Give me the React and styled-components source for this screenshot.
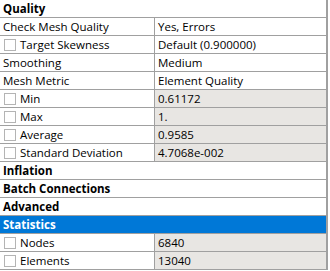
import React from "react";
import styled, { createGlobalStyle } from "styled-components";

const GlobalStyle = createGlobalStyle`
    html, body {
        margin: 0;
        padding: 0;
        background: #ffffff;
    }
    body {
        font-family: "Open Sans", "Noto Sans", sans-serif;
        font-size: 11.5px;
        color: #000000;
    }
`;

const Panel = styled.div`
    width: 326px;
    border-right: 2px solid #a0a0a0;
    background: #ffffff;
`;

const Row = styled.div`
    display: flex;
    height: 17px;
    border-bottom: 1px solid #a0a0a0;
    background: ${(p) => (p.selected ? "#0078d7" : "#ffffff")};
    color: ${(p) => (p.selected ? "#ffffff" : "#000000")};
`;

const Header = styled.div`
    flex: 1;
    display: flex;
    align-items: center;
    padding-left: 3px;
    font-weight: 700;
    line-height: 17px;
    white-space: nowrap;
`;

const Label = styled.div`
    width: 155px;
    flex-shrink: 0;
    display: flex;
    align-items: center;
    gap: 4px;
    padding-left: ${(p) => (p.check ? "4px" : "3px")};
    box-sizing: border-box;
    border-right: 1px solid #a0a0a0;
    line-height: 17px;
    white-space: nowrap;
`;

const Value = styled.div`
    flex: 1;
    display: flex;
    align-items: center;
    padding-left: 3px;
    background: ${(p) => (p.readonly ? "#e8e6e3" : "#ffffff")};
    line-height: 17px;
    white-space: nowrap;
`;

const Check = styled.span`
    width: 12px;
    height: 12px;
    box-sizing: border-box;
    border: 1px solid #b4b4b4;
    background: #ffffff;
    flex-shrink: 0;
`;

const rows = [
    { header: "Quality" },
    { label: "Check Mesh Quality", value: "Yes, Errors" },
    { label: "Target Skewness", value: "Default (0.900000)", check: true },
    { label: "Smoothing", value: "Medium" },
    { label: "Mesh Metric", value: "Element Quality" },
    { label: "Min", value: "0.61172", check: true, readonly: true },
    { label: "Max", value: "1.", check: true, readonly: true },
    { label: "Average", value: "0.9585", check: true, readonly: true },
    { label: "Standard Deviation", value: "4.7068e-002", check: true, readonly: true },
    { header: "Inflation" },
    { header: "Batch Connections" },
    { header: "Advanced" },
    { header: "Statistics", selected: true },
    { label: "Nodes", value: "6840", check: true, readonly: true },
    { label: "Elements", value: "13040", check: true, readonly: true },
];

export default function App() {
    return (
        <>
            <GlobalStyle />
            <Panel>
                {rows.map((r, i) =>
                    r.header ? (
                        <Row key={i} selected={r.selected}>
                            <Header>{r.header}</Header>
                        </Row>
                    ) : (
                        <Row key={i}>
                            <Label check={r.check}>
                                {r.check && <Check />}
                                {r.label}
                            </Label>
                            <Value readonly={r.readonly}>{r.value}</Value>
                        </Row>
                    )
                )}
            </Panel>
        </>
    );
}
